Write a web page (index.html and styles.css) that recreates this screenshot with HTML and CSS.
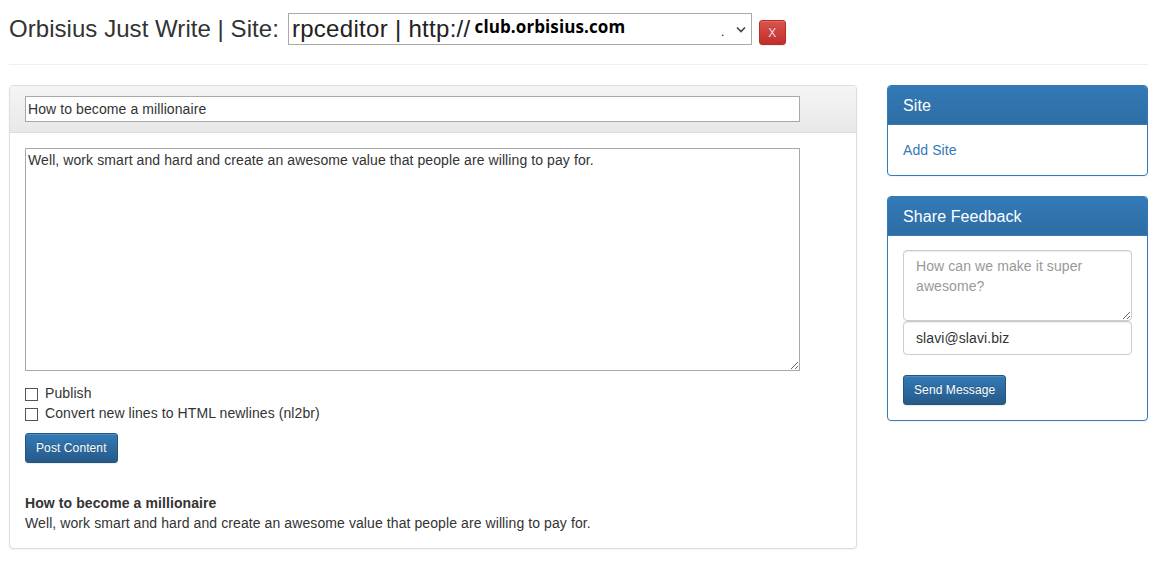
FILE: index.html
```html
<!DOCTYPE html>
<html>
<head>
<meta charset="utf-8">
<title>Orbisius Just Write</title>
<link rel="stylesheet" href="styles.css">
</head>
<body>
<div class="page">
  <header class="topbar">
    <h1 class="title">Orbisius Just Write | Site:</h1>
    <div class="fake-select">
      <span class="sel-main">rpceditor | http://</span><span class="sel-host">club.orbisius.com</span>
      <span class="sel-dot">.</span>
      <svg class="sel-chev" width="10" height="7" viewBox="0 0 10 7"><polyline points="1,1.5 5,5.5 9,1.5" fill="none" stroke="#444" stroke-width="1.6"/></svg>
    </div>
    <button class="btn btn-danger btn-x">X</button>
  </header>
  <hr class="sep">
  <div class="layout">
    <main class="main-col">
      <section class="panel panel-default">
        <div class="panel-heading light">
          <input class="plain-input" type="text" value="How to become a millionaire">
        </div>
        <div class="panel-body">
          <textarea class="plain-area">Well, work smart and hard and create an awesome value that people are willing to pay for.</textarea>
          <label class="check"><input type="checkbox"><span>Publish</span></label>
          <label class="check"><input type="checkbox"><span>Convert new lines to HTML newlines (nl2br)</span></label>
          <button class="btn btn-primary btn-sm post-btn">Post Content</button>
          <div class="preview">
            <h4 class="preview-title">How to become a millionaire</h4>
            <p class="preview-text">Well, work smart and hard and create an awesome value that people are willing to pay for.</p>
          </div>
        </div>
      </section>
    </main>
    <aside class="side-col">
      <section class="panel panel-primary">
        <div class="panel-heading blue"><h3 class="panel-title">Site</h3></div>
        <div class="panel-body side-body">
          <a class="link" href="#">Add Site</a>
        </div>
      </section>
      <section class="panel panel-primary">
        <div class="panel-heading blue"><h3 class="panel-title">Share Feedback</h3></div>
        <div class="panel-body side-body fb-body">
          <textarea class="form-control fb-area" placeholder="How can we make it super awesome?"></textarea>
          <input class="form-control fb-email" type="text" value="slavi@slavi.biz">
          <button class="btn btn-primary btn-sm send-btn">Send Message</button>
        </div>
      </section>
    </aside>
  </div>
</div>
</body>
</html>
```

FILE: styles.css
```css
* { box-sizing: border-box; }
html, body { margin: 0; padding: 0; background: #fff; }
body {
  font-family: "Liberation Sans", Arial, sans-serif;
  font-size: 14px;
  line-height: 1.42857;
  color: #333;
  letter-spacing: 0.09px;
}
.page { padding: 0 16px 0 9px; }

.topbar {
  display: flex;
  align-items: flex-start;
  padding-top: 13px;
}
.title {
  margin: 0;
  font-size: 24px;
  font-weight: normal;
  line-height: 32px;
  color: #333;
  margin-right: 9px;
  letter-spacing: 0.05px;
}
.fake-select {
  position: relative;
  width: 464px;
  height: 32px;
  border: 1px solid #a9a9a9;
  background: #fff;
  display: flex;
  align-items: center;
  padding-left: 3px;
  color: #000;
  white-space: nowrap;
}
.sel-main { font-size: 24px; line-height: 30px; color: #222; letter-spacing: 0.3px; }
.sel-host {
  font-family: "Open Sans", "Liberation Sans", sans-serif;
  font-weight: bold;
  font-size: 17px;
  letter-spacing: 0.1px;
  margin-left: 4px;
  margin-top: -4px;
  color: #000;
}
.sel-dot { position: absolute; left: 432px; top: 10px; font-size: 12px; color: #000; }
.sel-chev { position: absolute; right: 5px; top: 12px; }

.btn {
  display: inline-block;
  font-family: "Liberation Sans", Arial, sans-serif;
  border: 1px solid transparent;
  border-radius: 3px;
  color: #fff;
  cursor: pointer;
  text-shadow: 0 -1px 0 rgba(0,0,0,.2);
  box-shadow: inset 0 1px 0 rgba(255,255,255,.15), 0 1px 1px rgba(0,0,0,.075);
}
.btn-danger {
  background: linear-gradient(#d9534f, #c12e2a);
  border-color: #b92c28;
}
.btn-x {
  margin-left: 7px;
  margin-top: 7px;
  width: 27px;
  height: 25px;
  padding: 0;
  font-size: 12px;
  line-height: 20px;
  color: #fde;
}
.btn-primary {
  background: linear-gradient(#337ab7, #265a88);
  border-color: #245580;
}
.btn-sm {
  padding: 5px 10px;
  font-size: 12px;
  line-height: 1.5;
  height: 30px;
  letter-spacing: 0.1px;
}

.sep {
  margin: 19px 0 20px;
  border: 0;
  border-top: 1px solid #eee;
}

.layout {
  display: flex;
  align-items: flex-start;
  gap: 30px;
}
.main-col { width: 848px; }
.side-col { flex: 1; }

.panel {
  background: #fff;
  border: 1px solid transparent;
  border-radius: 4px;
  box-shadow: 0 1px 2px rgba(0,0,0,.05);
  margin-bottom: 20px;
}
.panel-default { border-color: #ddd; }
.panel-primary { border-color: #337ab7; }
.panel-heading {
  border-bottom: 1px solid transparent;
  border-radius: 3px 3px 0 0;
}
.panel-heading.light {
  background: linear-gradient(#f5f5f5, #e8e8e8);
  border-bottom-color: #ddd;
  padding: 10px 56px 10px 15px;
}
.panel-heading.blue {
  background: linear-gradient(#337ab7, #2e6da4);
  border-bottom-color: #337ab7;
  padding: 10px 15px;
  height: 39px;
}
.panel-title {
  margin: 0;
  font-size: 16px;
  font-weight: normal;
  line-height: 19px;
  color: #fff;
}
.panel-body { padding: 15px 56px 15px 15px; }
.side-body { padding: 15px; }
.fb-body { padding-top: 14px; }

.plain-input {
  display: block;
  width: 100%;
  height: 26px;
  border: 1px solid #a9a9a9;
  padding: 1px 2px;
  font-family: "Liberation Sans", Arial, sans-serif;
  font-size: 14px;
  letter-spacing: 0.09px;
  color: #333;
  background: #fff;
  margin: 0;
}
.plain-area {
  display: block;
  width: 100%;
  height: 223px;
  border: 1px solid #a9a9a9;
  padding: 2px 2px;
  font-family: "Liberation Sans", Arial, sans-serif;
  font-size: 14px;
  letter-spacing: 0.09px;
  line-height: 1.42857;
  color: #333;
  margin: 0 0 13px;
}
.check {
  display: flex;
  align-items: center;
  height: 20px;
  font-size: 14px;
}
.check input {
  appearance: none;
  -webkit-appearance: none;
  margin: 0 7px 0 0;
  width: 13px;
  height: 13px;
  border: 1px solid #555;
  border-radius: 0;
  background: #fff;
}
.post-btn { margin-top: 9px; }

.preview { margin-top: 30px; }
.preview-title {
  margin: 0;
  font-size: 14px;
  font-weight: bold;
  line-height: 20px;
}
.preview-text { margin: 0; line-height: 20px; }

.link { color: #337ab7; text-decoration: none; font-size: 14px; line-height: 20px; display: block; }

.form-control {
  display: block;
  width: 100%;
  border: 1px solid #ccc;
  border-radius: 4px;
  padding: 6px 12px;
  font-family: "Liberation Sans", Arial, sans-serif;
  font-size: 14px;
  letter-spacing: 0.09px;
  line-height: 1.42857;
  color: #555;
  box-shadow: inset 0 1px 1px rgba(0,0,0,.075);
  background: #fff;
  margin: 0;
}
.form-control::placeholder { color: #999; }
.fb-area { height: 71px; resize: vertical; }
.fb-email { height: 34px; color: #333; }
.send-btn { margin-top: 20px; }
```
